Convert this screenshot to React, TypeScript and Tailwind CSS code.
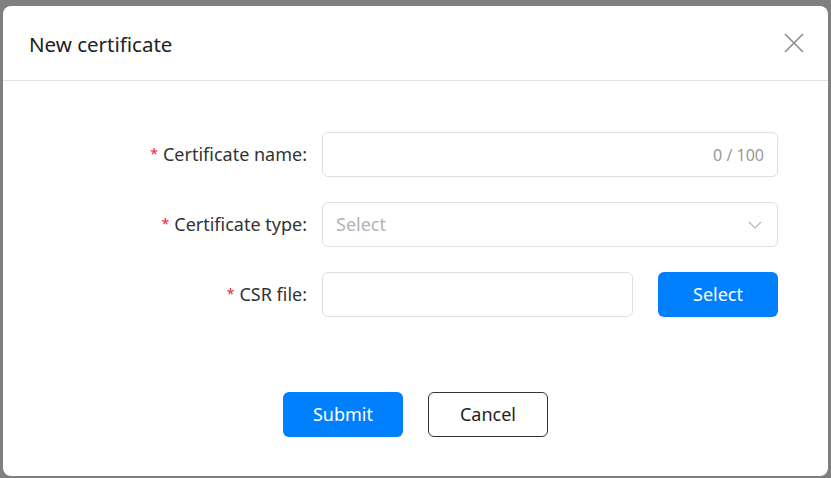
export default function App() {
    return (
        <div className="h-[478px] w-[831px] overflow-hidden bg-[#7f7f7f] pl-[3px] pt-[6px] font-['Noto_Sans','Liberation_Sans',sans-serif]">
            <div className="flex h-[470px] w-[825px] flex-col rounded-[8px] bg-white">
                <div className="flex h-[75px] items-center justify-between border-b border-[#e4e4e4] pl-[26px] pr-[24px]">
                    <h1 className="pt-[2px] text-[20.5px] text-[#222]">New certificate</h1>
                    <svg width="20" height="20" viewBox="0 0 20 20" className="text-[#8c8c8c]">
                        <path d="M1 1 L19 19 M19 1 L1 19" stroke="currentColor" strokeWidth="1.6" fill="none" />
                    </svg>
                </div>

                <div className="flex flex-col gap-[25px] pt-[51px]">
                    <div className="flex h-[45px] items-center">
                        <label className="w-[304px] text-right text-[18px] text-[#333]">
                            <span className="relative top-[-2px] mr-[5px] text-[14px] text-[#f5222d]">*</span>Certificate name:
                        </label>
                        <div className="ml-[15px] flex h-[45px] w-[456px] items-center justify-end rounded-[6px] border border-[#dcdfe6] pr-[13px]">
                            <span className="text-[16px] text-[#999]">0 / 100</span>
                        </div>
                    </div>

                    <div className="flex h-[45px] items-center">
                        <label className="w-[304px] text-right text-[18px] text-[#333]">
                            <span className="relative top-[-2px] mr-[5px] text-[14px] text-[#f5222d]">*</span>Certificate type:
                        </label>
                        <div className="ml-[15px] flex h-[45px] w-[456px] items-center justify-between rounded-[6px] border border-[#dcdfe6] pl-[13px] pr-[15px]">
                            <span className="text-[18px] text-[#b0b3b8]">Select</span>
                            <svg width="14" height="8" viewBox="0 0 14 8" className="text-[#b5b5b5]">
                                <path d="M1 1 L7 7 L13 1" stroke="currentColor" strokeWidth="1.2" fill="none" />
                            </svg>
                        </div>
                    </div>

                    <div className="flex h-[45px] items-center">
                        <label className="w-[304px] text-right text-[18px] text-[#333]">
                            <span className="relative top-[-2px] mr-[5px] text-[14px] text-[#f5222d]">*</span>CSR file:
                        </label>
                        <div className="ml-[15px] h-[45px] w-[311px] rounded-[6px] border border-[#dcdfe6]" />
                        <button className="ml-[25px] h-[45px] w-[120px] rounded-[6px] bg-[#0080ff] text-[18px] text-white">
                            Select
                        </button>
                    </div>
                </div>

                <div className="flex justify-center gap-[25px] pt-[75px]">
                    <button className="h-[45px] w-[120px] rounded-[6px] bg-[#0080ff] text-[18px] text-white">
                        Submit
                    </button>
                    <button className="h-[45px] w-[120px] rounded-[6px] border border-[#333] bg-white text-[18px] text-[#222]">
                        Cancel
                    </button>
                </div>
            </div>
        </div>
    );
}
